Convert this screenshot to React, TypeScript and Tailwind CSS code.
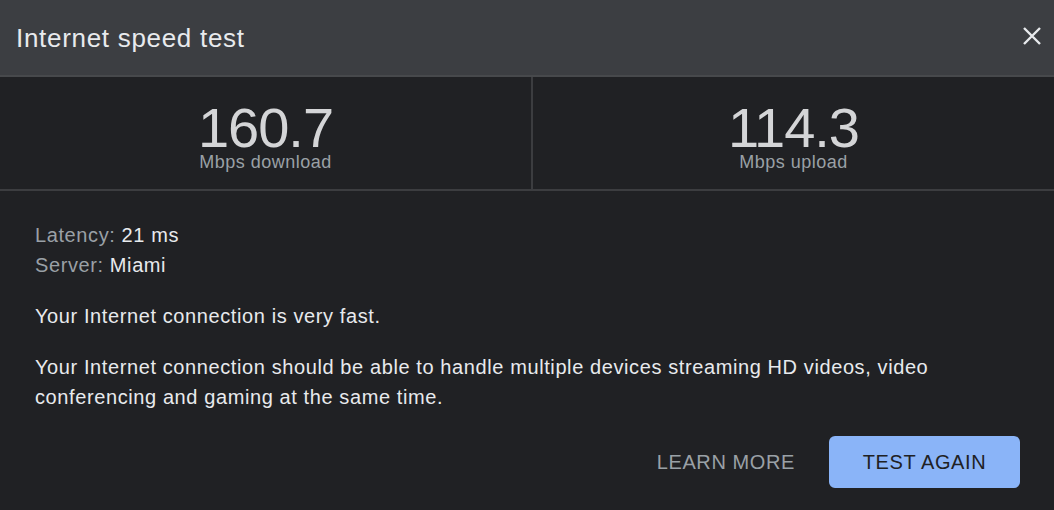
import React from 'react';

const font = { fontFamily: '"Liberation Sans", Arial, sans-serif' };

function Stat({ value, label, className }: { value: string; label: string; className: string }) {
  return (
    <div className={`flex flex-col items-center pt-[27px] ${className}`}>
      <div className="text-[56px] leading-[47px] text-[#d4d5d7] tracking-[-1px]">{value}</div>
      <div className="text-[18px] leading-[22px] text-[#9aa0a6] tracking-[0.5px]">{label}</div>
    </div>
  );
}

export default function App() {
  return (
    <div className="w-[1054px] h-[510px] bg-[#202124] flex flex-col overflow-hidden" style={font}>
      {/* Header */}
      <div className="h-[77px] bg-[#3c3e42] flex items-center justify-between pl-[16px] pr-[10px] border-b-2 border-[#47494c]">
        <div className="text-[26px] tracking-[0.7px] text-[#e8eaed] pt-[1px]">Internet speed test</div>
        <button className="w-[24px] h-[24px] flex items-center justify-center text-[#e8eaed] -mt-[3px]">
          <svg width="20" height="20" viewBox="0 0 20 20" fill="none" stroke="currentColor" strokeWidth="2.4">
            <path d="M2 2L18 18M18 2L2 18" />
          </svg>
        </button>
      </div>

      {/* Results */}
      <div className="h-[114px] flex border-b-2 border-[#3c3d40]">
        <Stat value="160.7" label="Mbps download" className="w-[531px]" />
        <div className="w-[2px] bg-[#3c3d40]" />
        <Stat value="114.3" label="Mbps upload" className="flex-1" />
      </div>

      {/* Details */}
      <div className="flex-1 flex flex-col px-[35px] pt-[29px] text-[20px] leading-[30px] tracking-[0.6px] text-[#e8eaed]">
        <div>
          <span className="text-[#9aa0a6]">Latency:</span> 21 ms
        </div>
        <div>
          <span className="text-[#9aa0a6]">Server:</span> Miami
        </div>
        <p className="mt-[21px]">Your Internet connection is very fast.</p>
        <p className="mt-[21px] pr-[60px]">
          Your Internet connection should be able to handle multiple devices streaming HD videos, video conferencing and gaming at the same time.
        </p>

        <div className="flex justify-end items-center gap-[34px] mt-[24px] -mr-[1px]">
          <button className="text-[20px] tracking-[0.6px] text-[#9aa0a6]">LEARN MORE</button>
          <button className="w-[191px] h-[52px] rounded-[6px] bg-[#8ab4f8] text-[20px] tracking-[0.6px] text-[#202124]">
            TEST AGAIN
          </button>
        </div>
      </div>
    </div>
  );
}
